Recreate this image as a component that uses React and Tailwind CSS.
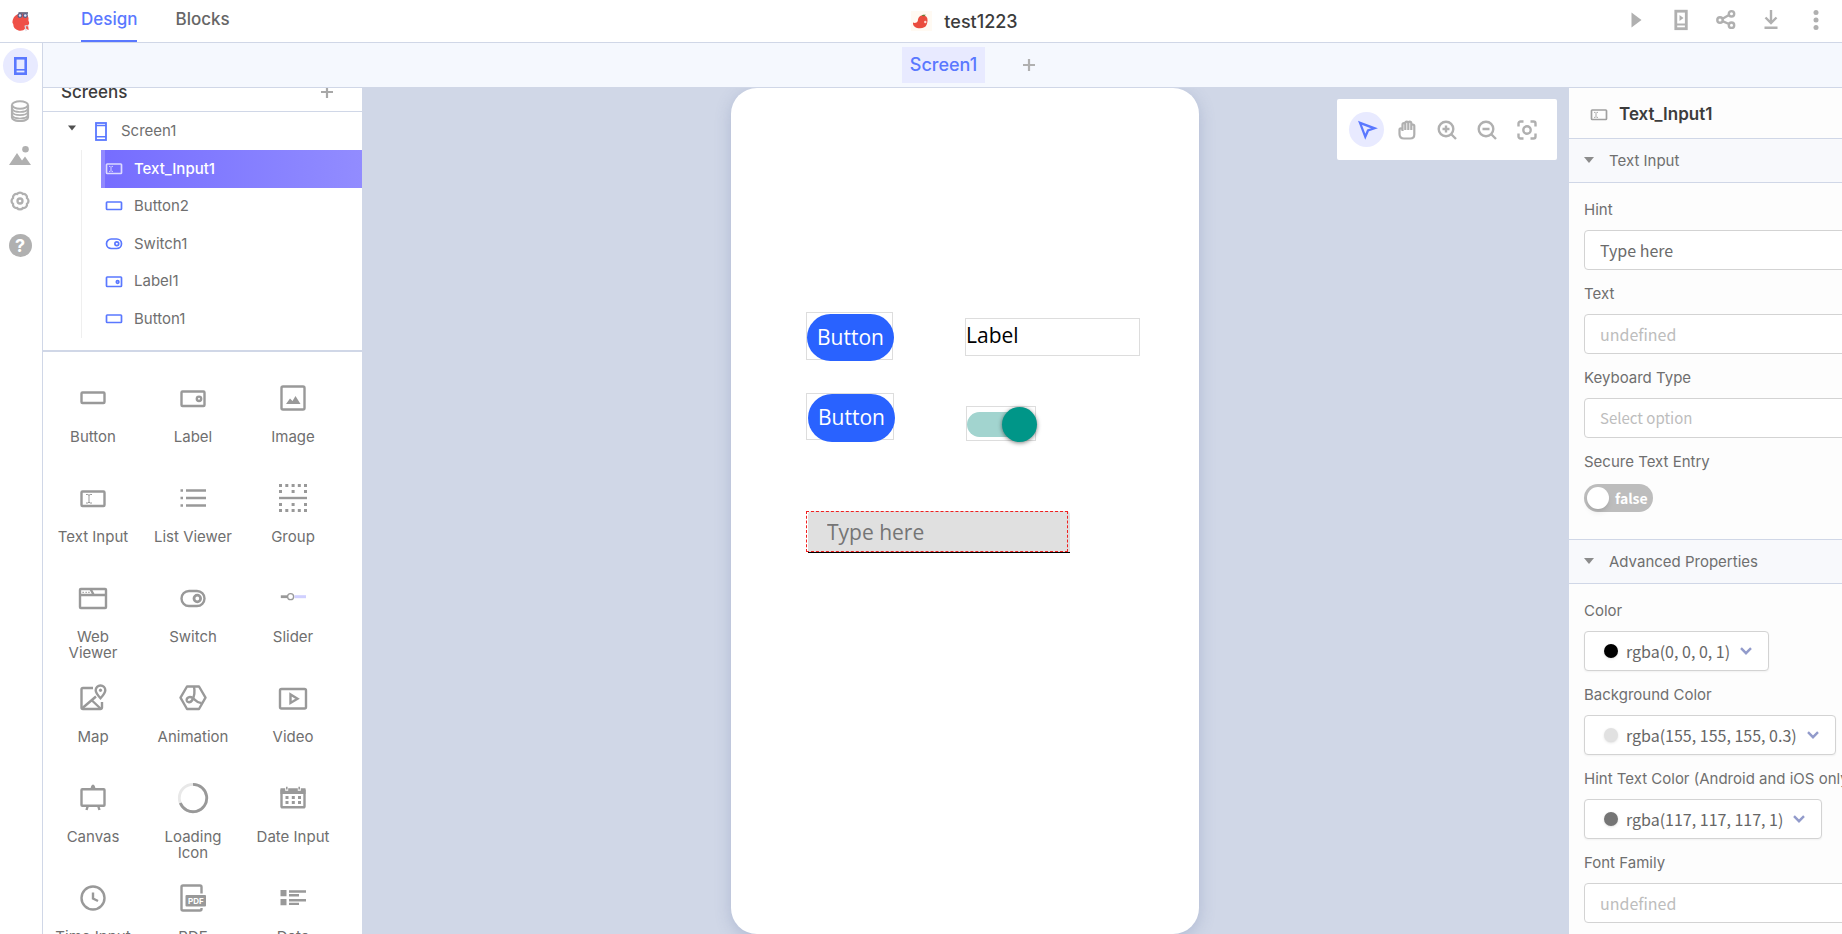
import { useState } from 'react'

const UI_FONT = "font-['Inter','Liberation_Sans',sans-serif]"
const FIELD_FONT = "font-['Noto_Sans_CJK_SC','Noto_Sans',sans-serif]"
const DEVICE_FONT = "font-['Open_Sans','Noto_Sans',sans-serif]"

/* ---------- small component icons, used in the tree ---------- */

function ScreenIcon() {
  return (
    <svg width="12" height="19" viewBox="0 0 12 19" fill="none" stroke="currentColor">
      <rect x="1" y="1" width="10" height="17" strokeWidth="1.8" />
      <path d="M1 3.5h10M1 14.8h10" strokeWidth="1.5" />
    </svg>
  )
}

function TreeIcon({ type }) {
  return (
    <svg width="18" height="12" viewBox="0 0 18 12" fill="none" stroke="currentColor" strokeWidth="1.7">
      {type === 'button' && <rect x="1.5" y="2" width="15" height="7.5" rx="0.7" />}
      {type === 'text' && (
        <>
          <rect x="1.5" y="1" width="15" height="9.5" rx="0.7" />
          <path d="M4 3.4h1.4M6.6 3.4H8M6 3.6v4.6M4 8.4h1.4M6.6 8.4H8" strokeWidth="0.9" />
        </>
      )}
      {type === 'switch' && (
        <>
          <rect x="1.5" y="1" width="15" height="9.5" rx="4.7" />
          <circle cx="11.8" cy="5.8" r="1.9" />
        </>
      )}
      {type === 'label' && (
        <>
          <rect x="1.5" y="1" width="15" height="9.5" rx="0.7" />
          <circle cx="12.6" cy="6" r="1.3" />
        </>
      )}
    </svg>
  )
}

/* ---------- palette icons, all on a 32px box ---------- */

const dot = (x, y) => <rect key={`${x}-${y}`} x={x} y={y} width="3" height="3" fill="currentColor" stroke="none" />

const paletteIcons = {
  button: <rect x="4.5" y="10.5" width="23" height="10.5" rx="1" />,
  label: (
    <>
      <rect x="4.5" y="9.5" width="23" height="14.5" rx="1" />
      <circle cx="22" cy="16.8" r="2.2" />
    </>
  ),
  image: (
    <>
      <rect x="4.5" y="4.5" width="23" height="23" rx="1.5" />
      <path d="M9 22l4-5.5 2.5 2.5L18.5 14l5 8z" fill="currentColor" stroke="none" />
    </>
  ),
  textInput: (
    <>
      <rect x="4.5" y="9.5" width="23" height="14.5" rx="1" />
      <path d="M9 12.5h1.8l1.2.8 1.2-.8H15M12 13v8M9 21h1.8l1.2-.8 1.2.8H15" strokeWidth="1" />
    </>
  ),
  list: (
    <>
      <path d="M9 8.5h20M9 16h20M9 23.5h20" />
      <path d="M3.5 8.5h2.5M3.5 16h2.5M3.5 23.5h2.5" strokeWidth="2.6" />
    </>
  ),
  group: (
    <>
      <path d="M2 16h28" strokeWidth="2.4" />
      {[2, 8.3, 14.6, 20.8, 27].map((x) => dot(x, 2))}
      {[2, 14.6, 27].map((x) => dot(x, 8))}
      {[2, 14.6, 27].map((x) => dot(x, 21))}
      {[2, 8.3, 14.6, 20.8, 27].map((x) => dot(x, 27))}
    </>
  ),
  web: (
    <>
      <rect x="3" y="7" width="26" height="19" rx="0.8" />
      <path d="M3 13h26M13.5 7l3 5.5" />
      <path d="M5.5 10.3h1.3M8.5 10.3h1.3M11.3 10.3h1.3" strokeWidth="1.3" />
    </>
  ),
  switch: (
    <>
      <rect x="4.5" y="9" width="23" height="15" rx="7.5" />
      <circle cx="20.3" cy="16.5" r="3.3" strokeWidth="2.8" />
    </>
  ),
  slider: (
    <>
      <path d="M17.5 14.7H29" stroke="#d0d0ff" strokeWidth="3" />
      <path d="M3.8 14.7H11" strokeWidth="2.8" />
      <circle cx="13.6" cy="14.7" r="3" fill="white" strokeWidth="1.3" />
    </>
  ),
  map: (
    <>
      <path d="M16 6H6a1.5 1.5 0 0 0-1.500 1.500v18A1.500 1.500 0 0 0 6 27h17.500a1.500 1.500 0 0 0 1.500-1.500V20" />
      <path d="M5.500 26L19 14.500M15 18.500l8.500 8" />
      <path d="M23.500 16.300c-3-3.300-4.800-5.300-4.800-8a4.800 4.800 0 0 1 9.600 0c0 2.700-1.800 4.700-4.800 8z" />
      <circle cx="23.500" cy="8.300" r="1.200" fill="currentColor" strokeWidth="1" />
    </>
  ),
  animation: (
    <>
      <path d="M10 4.5h12l6.5 11.2L22 27H10L3.5 15.7z" strokeLinejoin="round" />
      <path d="M17 4.500c1 5 .5 10-2 14-1.500 2.300-5 2.300-5.300-.3-.2-2.700 3-4.200 6-2.200 3 2.200 5 6 9 4.700" />
    </>
  ),
  video: (
    <>
      <rect x="3" y="7" width="26" height="19.500" rx="1.500" />
      <path d="M13.500 12.500v8.500l7-4.200z" />
    </>
  ),
  canvas: (
    <>
      <rect x="4.500" y="7.300" width="23" height="16.500" rx="0.800" />
      <path d="M13.500 7c.2-2 1-4.500 2.500-4.500s2.300 2.500 2.500 4.500z" fill="currentColor" stroke="none" />
      <path d="M10.800 24l-1.300 4M21.200 24l1.300 4" />
    </>
  ),
  loading: (
    <>
      <circle cx="16" cy="16" r="13.700" stroke="#e8e8e8" strokeWidth="2.800" />
      <path d="M16 2.300A13.700 13.700 0 1 1 3.300 21" strokeWidth="2.800" />
    </>
  ),
  date: (
    <>
      <path d="M4.500 7.500v17a.8.8 0 0 0 .8.800h21.400a.8.8 0 0 0 .8-.8v-17" />
      <path d="M3.500 6.200h4.700v2.600h3V6.200h9.600v2.600h3V6.200h4.700V12h-25zM9 4.800h1.600v2.800H9zM21.400 4.800H23v2.800h-1.600z" fill="currentColor" stroke="none" />
      {[8.5, 14.8, 21].map((x) => dot(x, 14))}
      {[8.5, 14.8, 21].map((x) => dot(x, 19))}
    </>
  ),
  time: (
    <>
      <circle cx="16" cy="16" r="11.500" />
      <path d="M16 10.500v6l5 2.500" />
    </>
  ),
  pdf: (
    <>
      <path d="M24.500 11.500V5A1.500 1.500 0 0 0 23 3.500H6A1.500 1.500 0 0 0 4.500 5v22A1.500 1.500 0 0 0 6 28.500h17a1.500 1.500 0 0 0 1.500-1.500v-1" />
      <rect x="8.500" y="13" width="20.500" height="11.500" rx="1" fill="currentColor" stroke="none" />
      <text x="18.800" y="21.600" fontSize="8" fontWeight="700" textAnchor="middle" fill="white" stroke="none">PDF</text>
    </>
  ),
  data: (
    <>
      <path d="M3.500 8H9.500v6.300H3.500zM3.500 17H9.500v6.300H3.500z" fill="currentColor" stroke="none" />
      <path d="M12 9.500h17M12 13.200h10M12 18.200h17M12 21.900h10" />
    </>
  ),
}

const palette = [
  ['button', 'Button'],
  ['label', 'Label'],
  ['image', 'Image'],
  ['textInput', 'Text Input'],
  ['list', 'List Viewer'],
  ['group', 'Group'],
  ['web', 'Web\nViewer'],
  ['switch', 'Switch'],
  ['slider', 'Slider'],
  ['map', 'Map'],
  ['animation', 'Animation'],
  ['video', 'Video'],
  ['canvas', 'Canvas'],
  ['loading', 'Loading\nIcon'],
  ['date', 'Date Input'],
  ['time', 'Time Input'],
  ['pdf', 'PDF\nViewer'],
  ['data', 'Data\nViewer'],
]

const tree = [
  ['text', 'Text_Input1'],
  ['button', 'Button2'],
  ['switch', 'Switch1'],
  ['label', 'Label1'],
  ['button', 'Button1'],
]

function Caret({ className }) {
  return (
    <svg width="10" height="6" viewBox="0 0 10 6" className={className}>
      <path d="M0 0h10L5 6z" fill="currentColor" />
    </svg>
  )
}

function PlusIcon({ size }) {
  return (
    <svg width={size} height={size} viewBox="0 0 12 12" stroke="currentColor" strokeWidth="2.200">
      <path d="M6 0v12M0 6h12" />
    </svg>
  )
}

/* ---------- header ---------- */

function Logo() {
  return (
    <svg width="20" height="22" viewBox="0 0 20 22">
      <path d="M9.500 3.500c4.500-.5 7.500 1 8 4.500.2 1.500-.5 2 .3 3.500.8 1.600.2 3-.8 3.800l.7 4.700-3.700-1.500c-.8 1.800-4 2.800-6.500 2-3.300-1-5.300-3-5.200-6 0-1-1.300-1.500-.8-3C2 7.500 4.500 4 9.500 3.500z" fill="#ef5047" />
      <path d="M14 15.500l1.200 5.500M14.500 15.500l3 .5" stroke="#d9dbe4" strokeWidth="1.200" />
      <path d="M7.500 3h9.500" stroke="#55506a" strokeWidth="1.500" />
      <circle cx="9" cy="5.500" r="1.900" fill="#dfe6fb" stroke="#5a5f86" strokeWidth="1.200" />
      <circle cx="14.300" cy="5.500" r="1.900" fill="#dfe6fb" stroke="#5a5f86" strokeWidth="1.200" />
    </svg>
  )
}

function ProjectIcon() {
  return (
    <svg width="21" height="20" viewBox="0 0 21 20">
      <rect width="21" height="20" fill="#fffaf3" />
      <path d="M2 11.500c1.800 1 4 .3 4.800-1.500C7 6.500 8.500 4.500 12 4.500c3 0 4.700 1.800 4.500 4.500 0 2-.2 2.800-.8 4.500-.8 2.500-3.500 3.800-6.700 3.800-4.200 0-7.500-2-7-5.800z" fill="#ea4c3d" />
      <path d="M10.500 4.800c1-1.500 2.500-.8 4-1.300 0 1.700-2 2.300-4 1.300z" fill="#6b7a35" />
      <circle cx="14.300" cy="11" r="1.200" fill="#ffd9d2" />
    </svg>
  )
}

function Header() {
  return (
    <header className="flex h-[43px] shrink-0 items-center border-b border-[#d0d7e7] bg-white">
      <div className="flex h-full flex-1 items-center">
        <a href="#home" aria-label="Home" className="ml-[11px]">
          <Logo />
        </a>
        <nav className="ml-[50px] flex h-full gap-[38px] text-[17px] font-medium">
          <a href="#design" className="flex items-center border-b-2 border-[#5a78ff] text-[#5a78ff]">Design</a>
          <a href="#blocks" className="flex items-center border-b-2 border-transparent text-[#666666]">Blocks</a>
        </nav>
      </div>
      <div className="flex items-center gap-3 pl-[101px] text-[18px] font-medium text-[#3c3c3c]">
        <ProjectIcon />
        <span>test1223</span>
      </div>
      <div className="flex flex-1 items-center justify-end gap-[21px] pr-[14px] pb-[2px] text-[#b0b0b0]">
        <button aria-label="Play" className="flex size-6 items-center justify-center">
          <svg width="24" height="24" viewBox="0 0 24 24"><path d="M7.500 4.500v15l10-7.500z" fill="currentColor" /></svg>
        </button>
        <button aria-label="Live test" className="flex size-6 items-center justify-center">
          <svg width="24" height="24" viewBox="0 0 24 24" fill="none" stroke="currentColor">
            <rect x="6.800" y="3.200" width="10.500" height="17.500" strokeWidth="2.800" />
            <path d="M6 16.500h12" strokeWidth="2" />
            <path d="M10.500 7v6l4-3z" fill="currentColor" stroke="none" />
          </svg>
        </button>
        <button aria-label="Share" className="flex size-6 items-center justify-center">
          <svg width="24" height="24" viewBox="0 0 24 24" fill="none" stroke="currentColor" strokeWidth="2.400">
            <circle cx="6" cy="12" r="2.700" />
            <circle cx="17.500" cy="5.800" r="2.700" />
            <circle cx="17.500" cy="17.200" r="2.700" />
            <path d="M8.500 10.700L15 7M8.500 13.200l6.500 2.800" />
          </svg>
        </button>
        <button aria-label="Download" className="flex size-6 items-center justify-center">
          <svg width="24" height="24" viewBox="0 0 24 24" fill="none" stroke="currentColor" strokeWidth="2.400">
            <path d="M12 2v13M6.500 9.500L12 15l5.500-5.500M5.500 19.800h13" />
          </svg>
        </button>
        <button aria-label="More" className="flex size-6 items-center justify-center">
          <svg width="24" height="24" viewBox="0 0 24 24" fill="currentColor">
            <circle cx="12" cy="4.500" r="2.500" />
            <circle cx="12" cy="12" r="2.500" />
            <circle cx="12" cy="19.500" r="2.500" />
          </svg>
        </button>
      </div>
    </header>
  )
}

/* ---------- left side ---------- */

function IconRail() {
  return (
    <nav className="flex w-[43px] shrink-0 flex-col items-center gap-[10px] border-r border-[#d0d7e7] bg-white pt-[5px] pr-[2px] text-[#b0b0b0]">
      <button aria-label="Designer" className="flex size-[35px] items-center justify-center rounded-full bg-[#e8eaff] text-[#5a78ff]">
        <svg width="13" height="18" viewBox="0 0 13 18" fill="none" stroke="currentColor">
          <rect x="1.300" y="1.300" width="10.400" height="15.400" strokeWidth="2.600" />
          <path d="M1 12.800h11" strokeWidth="1.600" />
        </svg>
      </button>
      <button aria-label="Data" className="flex size-[35px] items-center justify-center">
        <svg width="20" height="22" viewBox="0 0 20 22" fill="none" stroke="currentColor">
          <ellipse cx="10" cy="5" rx="8" ry="3.700" strokeWidth="2" />
          <path d="M2 5v12.500c0 2 3.500 3.500 8 3.500s8-1.500 8-3.500V5" strokeWidth="2.200" />
          <path d="M2 9c1 2 4 3 8 3s7-1 8-3M2 12.200c1 2 4 3 8 3s7-1 8-3M2 15.500c1 2 4 3 8 3s7-1 8-3" strokeWidth="1.700" />
        </svg>
      </button>
      <button aria-label="Assets" className="flex size-[35px] items-center justify-center">
        <svg width="22" height="20" viewBox="0 0 22 20" fill="currentColor">
          <path d="M0 19L8 7l5 7.500 3-4L22 19z" />
          <circle cx="16.500" cy="3.300" r="3.300" />
        </svg>
      </button>
      <button aria-label="Settings" className="flex size-[35px] items-center justify-center">
        <svg width="22" height="22" viewBox="0 0 22 22" fill="none" stroke="currentColor" strokeWidth="2.300">
          <path d="M18 8.100a3.600 3.600 0 0 1 0 5.800a3.600 3.600 0 0 1-4.100 4.100a3.600 3.600 0 0 1-5.800 0a3.600 3.600 0 0 1-4.100-4.100a3.600 3.600 0 0 1 0-5.800a3.600 3.600 0 0 1 4.100-4.100a3.600 3.600 0 0 1 5.800 0a3.600 3.600 0 0 1 4.100 4.100z" />
          <circle cx="11" cy="11" r="2.500" />
        </svg>
      </button>
      <button aria-label="Help" className="flex size-[35px] items-center justify-center">
        <span className="flex size-[23px] items-center justify-center rounded-full bg-[#b0b0b0] text-[18px] font-bold text-white">?</span>
      </button>
    </nav>
  )
}

function ScreensPanel() {
  return (
    <section className="shrink-0 border-b-2 border-[#d0d7e7]">
      {/* heading is scrolled partly under the tab bar */}
      <div className="flex h-6 items-end overflow-hidden border-b border-[#d0d7e7]">
        <div className="flex h-[36px] w-full shrink-0 items-center justify-between pr-[29px] pl-[18px]">
          <h2 className="text-[17px] font-medium text-[#3c3c3c]">Screens</h2>
          <button aria-label="Add screen" className="pb-[2px] text-[#a8a8a8]"><PlusIcon size={12} /></button>
        </div>
      </div>
      <div className="pb-3 text-[15px] text-[#6f6f6f]">
        <div className="flex h-[38px] items-center pl-[25px]">
          <Caret className="mb-[6px] w-[8px] text-[#505050]" />
          <span className="ml-[19px] text-[#5a78ff]"><ScreenIcon /></span>
          <span className="ml-[14px]">Screen1</span>
        </div>
        <ul className="ml-[38px] grid h-[188px] grid-rows-5 border-l border-[#efefef] pl-[19px]">
          {tree.map(([type, name], i) => (
            <li key={name}>
              <button
                className={
                  i === 0
                    ? 'flex h-full w-full items-center gap-[11px] border-l-4 border-[#9189ff] bg-linear-to-r from-[#766dff] to-[#928cff] font-medium text-white'
                    : 'flex h-full w-full items-center gap-[11px] border-l-4 border-transparent'
                }
              >
                <span className={i === 0 ? 'text-[#dcdaff]' : 'text-[#5a78ff]'}><TreeIcon type={type} /></span>
                {name}
              </button>
            </li>
          ))}
        </ul>
      </div>
    </section>
  )
}

function Palette() {
  return (
    <section className="grid min-h-0 flex-1 auto-rows-[100px] grid-cols-3 overflow-hidden pt-[30px] pr-[19px]">
      {palette.map(([icon, label]) => (
        <button key={icon} className="flex flex-col items-center gap-[15px] text-[#999999]">
          <svg width="32" height="32" viewBox="0 0 32 32" fill="none" stroke="currentColor" strokeWidth="2.400">
            {paletteIcons[icon]}
          </svg>
          <span className="text-center text-[15px] leading-4 whitespace-pre text-[#6f6f6f]">{label}</span>
        </button>
      ))}
    </section>
  )
}

/* ---------- canvas ---------- */

function Toolbar() {
  return (
    <div className="absolute top-[11px] right-3 flex h-[61px] items-center gap-[5px] rounded-[2px] bg-white pr-[13px] pl-3 text-[#b0b0b0]">
      <button aria-label="Select" className="flex size-[35px] items-center justify-center rounded-full bg-[#e8eaff] text-[#5a78ff]">
        <svg width="22" height="22" viewBox="0 0 22 22" fill="none" stroke="currentColor" strokeWidth="2.300">
          <path d="M4 3.800l14.500 5.500-6.500 2.200-2.700 6.300z" />
        </svg>
      </button>
      <button aria-label="Pan" className="flex size-[35px] items-center justify-center">
        <svg width="20" height="20" viewBox="0 0 20 20" fill="none" stroke="currentColor" strokeWidth="2.200">
          <path d="M5.500 11V4.500a1.400 1.400 0 0 1 2.800 0V10 3.200a1.500 1.500 0 0 1 3 0V10 3.200a1.500 1.500 0 0 1 3 0V10 6a1.500 1.500 0 0 1 3 0v8.500c0 2.500-1.500 4-4 4H7c-3 0-4.500-2-4.500-4.500V9.500c0-1.500 2.500-1.500 3 0" />
        </svg>
      </button>
      <button aria-label="Zoom in" className="flex size-[35px] items-center justify-center">
        <svg width="20" height="20" viewBox="0 0 20 20" fill="none" stroke="currentColor" strokeWidth="2.400">
          <circle cx="9" cy="9" r="7.300" />
          <path d="M14 14l5 5M9 5.500v7M5.500 9h7" />
        </svg>
      </button>
      <button aria-label="Zoom out" className="flex size-[35px] items-center justify-center">
        <svg width="20" height="20" viewBox="0 0 20 20" fill="none" stroke="currentColor" strokeWidth="2.400">
          <circle cx="9" cy="9" r="7.300" />
          <path d="M14 14l5 5M5.500 9h7" />
        </svg>
      </button>
      <button aria-label="Center" className="flex size-[35px] items-center justify-center">
        <svg width="20" height="20" viewBox="0 0 20 20" fill="none" stroke="currentColor" strokeWidth="2.400">
          <path d="M1.500 6.500v-3a2 2 0 0 1 2-2h3M13.500 1.500h3a2 2 0 0 1 2 2v3M18.500 13.500v3a2 2 0 0 1-2 2h-3M6.500 18.500h-3a2 2 0 0 1-2-2v-3" />
          <circle cx="10" cy="10" r="3.700" />
        </svg>
      </button>
    </div>
  )
}

function Canvas() {
  const [on, setOn] = useState(true)
  return (
    <main className="relative flex min-w-0 flex-1 justify-center overflow-hidden bg-[#d0d7e7] pr-px">
      <div className={`relative h-full w-[468px] rounded-[26px] bg-white text-[21px] shadow-[0_4px_16px_rgba(80,100,150,0.25)] ${DEVICE_FONT}`}>
        <div className="absolute top-[224px] left-[75px] h-12 w-[87px] border border-[#dddddd]">
          <button className="mt-px h-[47px] w-[87px] rounded-full bg-[#2962ff] text-white">Button</button>
        </div>
        <div className="absolute top-[305px] left-[75px] h-[47px] w-[88px] border border-[#dddddd]">
          <button className="ml-px h-12 w-[87px] rounded-full bg-[#2962ff] text-white">Button</button>
        </div>
        <div className="absolute top-[230px] left-[234px] h-[38px] w-[175px] border border-[#dddddd] leading-8 text-black">Label</div>
        <label className="absolute top-[318px] left-[235px] flex h-[35px] w-[70px] items-center border border-[#dddddd] pt-px">
          <input type="checkbox" aria-label="Switch1" checked={on} onChange={() => setOn(!on)} className="sr-only" />
          <span className="h-[25px] w-[60px] shrink-0 rounded-full bg-[#a2d4cf]" />
          <span className="-ml-[25px] size-[35px] shrink-0 rounded-full bg-[#009688] shadow-[0_1px_4px_rgba(0,0,0,0.5)]" />
        </label>
        <div className="absolute top-[423px] left-[75px] h-[42px] w-[264px] pl-[2px]">
          <input
            aria-label="Text_Input1"
            placeholder="Type here"
            className="block h-[42px] w-full rounded-t-[4px] border-b border-black bg-[#e0e0e0] pl-[19px] placeholder:text-[#757575]"
          />
          {/* selection outline sits over the widget */}
          <span className="pointer-events-none absolute top-0 left-0 h-[41px] w-[262px] border border-dashed border-[#f02020]" />
        </div>
      </div>
      <Toolbar />
    </main>
  )
}

/* ---------- properties ---------- */

const boxClass = `h-10 rounded-[4px] border border-[#d3d3d3] bg-white ${FIELD_FONT}`

function SectionTitle({ children }) {
  return (
    <button className="flex h-[44px] w-full items-center border-b border-[#d0d7e7] bg-[#f8f9fc] pt-[2px] pl-[15px] text-[15px] text-[#6f6f6f]">
      <Caret className="mb-1 text-[#8c8c8c]" />
      <span className="ml-[15px]">{children}</span>
    </button>
  )
}

function Field({ id, label, children }) {
  return (
    <div className="mb-3 flex flex-col items-start">
      <label htmlFor={id} className="mb-2 text-[15px] leading-6 whitespace-nowrap text-[#6f6f6f]">{label}</label>
      {children}
    </div>
  )
}

function ColorButton({ id, swatch, children }) {
  return (
    <button id={id} className={`flex items-center pr-4 pl-[19px] text-[16px] text-[#666666] shadow-xs ${boxClass}`}>
      <span className={`size-[14px] rounded-full shadow-sm ${swatch}`} />
      <span className="ml-2">{children}</span>
      <svg width="12" height="8" viewBox="0 0 12 8" fill="none" stroke="#929bcb" strokeWidth="2.400" className="ml-[10px]">
        <path d="M1 1.200l5 5 5-5" />
      </svg>
    </button>
  )
}

function Properties() {
  const [secure, setSecure] = useState(false)
  return (
    <aside className="w-[273px] shrink-0 overflow-hidden bg-[#fdfdfd]">
      <div className="w-[320px]">
        <div className="flex h-[51px] items-center border-b border-[#d0d7e7] pt-[3px] pl-[21px] text-[#a0a0a0]">
          <TreeIcon type="text" />
          <h2 className="ml-[11px] text-[17px] font-semibold text-[#3c3c3c]">Text_Input1</h2>
        </div>
        <SectionTitle>Text Input</SectionTitle>
        <div className="px-[15px] pt-[15px] pb-[15px]">
          <Field id="hint" label="Hint">
            <input id="hint" defaultValue="Type here" className={`w-full px-[15px] text-[16px] text-[#6b6b6b] ${boxClass}`} />
          </Field>
          <Field id="text" label="Text">
            <input id="text" placeholder="undefined" className={`w-full px-[15px] text-[16px] placeholder:text-[#bdbdbd] ${boxClass}`} />
          </Field>
          <Field id="keyboard" label="Keyboard Type">
            <select id="keyboard" className={`w-full appearance-none px-[15px] text-[15px] text-[#bdbdbd] ${boxClass}`}>
              <option>Select option</option>
            </select>
          </Field>
          <Field id="secure" label="Secure Text Entry">
            <label className={`mt-[2px] flex h-7 w-[69px] items-center rounded-full bg-[#bdbdbd] pl-[3px] text-[14px] font-bold text-white ${FIELD_FONT}`}>
              <input id="secure" type="checkbox" checked={secure} onChange={() => setSecure(!secure)} className="sr-only" />
              <span className="size-[22px] rounded-full bg-white shadow-md" />
              <span className="ml-[6px]">{String(secure)}</span>
            </label>
          </Field>
        </div>
        <div className="border-t border-[#d0d7e7]">
          <SectionTitle>Advanced Properties</SectionTitle>
        </div>
        <div className="px-[15px] pt-[15px]">
          <Field id="color" label="Color">
            <ColorButton id="color" swatch="bg-black">rgba(0, 0, 0, 1)</ColorButton>
          </Field>
          <Field id="background" label="Background Color">
            <ColorButton id="background" swatch="bg-[#e1e1e1]">rgba(155, 155, 155, 0.3)</ColorButton>
          </Field>
          <Field id="hint-color" label="Hint Text Color (Android and iOS only)">
            <ColorButton id="hint-color" swatch="bg-[#757575]">rgba(117, 117, 117, 1)</ColorButton>
          </Field>
          <Field id="font" label="Font Family">
            <input id="font" placeholder="undefined" className={`w-full px-[15px] text-[16px] placeholder:text-[#bdbdbd] ${boxClass}`} />
          </Field>
        </div>
      </div>
    </aside>
  )
}

export default function App() {
  return (
    <div className={`flex h-screen flex-col overflow-hidden bg-white ${UI_FONT}`}>
      <Header />
      <div className="flex min-h-0 flex-1">
        <IconRail />
        <div className="flex min-w-0 flex-1 flex-col">
          <div className="flex h-[45px] shrink-0 items-center justify-center gap-8 border-b border-[#d0d7e7] bg-[#f5f8fe] pl-[58px]">
            <button className="mb-px h-9 bg-[#e8eaff] px-2 text-[18px] font-medium text-[#5a78ff]">Screen1</button>
            <button aria-label="Add screen tab" className="flex size-6 items-center justify-center text-[#b0b0b0]"><PlusIcon size={12} /></button>
          </div>
          <div className="flex min-h-0 flex-1">
            <div className="flex w-[319px] shrink-0 flex-col bg-white">
              <ScreensPanel />
              <Palette />
            </div>
            <Canvas />
            <Properties />
          </div>
        </div>
      </div>
    </div>
  )
}
